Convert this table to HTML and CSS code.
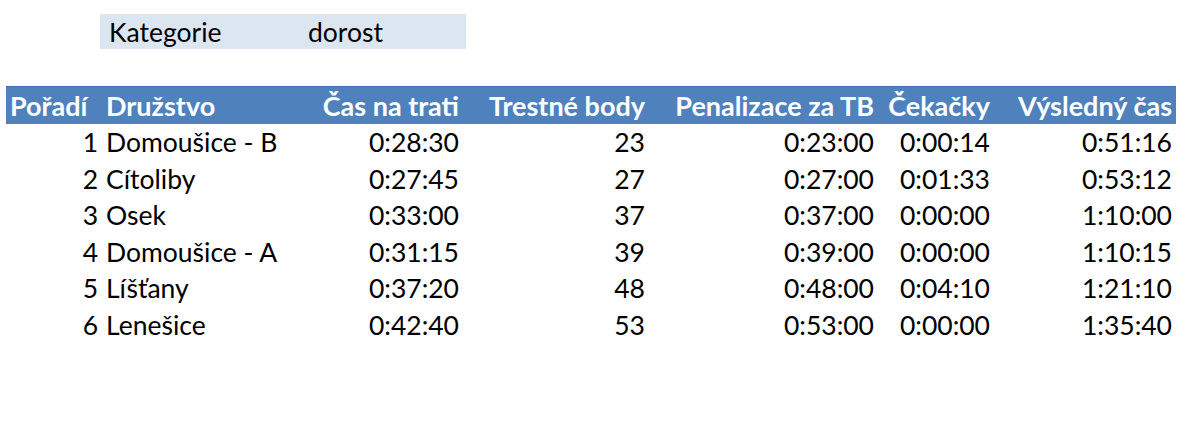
FILE: index.html
```html
<!DOCTYPE html>
<html lang="cs">
<head>
<meta charset="utf-8">
<title>Výsledky - dorost</title>
<link rel="stylesheet" href="styles.css">
</head>
<body>
<div class="category">
  <span class="cat-label">Kategorie</span>
  <span class="cat-value">dorost</span>
</div>
<table class="results">
  <colgroup>
    <col class="c1"><col class="c2"><col class="c3"><col class="c4"><col class="c5"><col class="c6"><col class="c7">
  </colgroup>
  <thead>
    <tr>
      <th class="left">Pořadí</th>
      <th class="left">Družstvo</th>
      <th>Čas na trati</th>
      <th>Trestné body</th>
      <th>Penalizace za TB</th>
      <th>Čekačky</th>
      <th>Výsledný čas</th>
    </tr>
  </thead>
  <tbody>
    <tr><td>1</td><td class="left">Domoušice - B</td><td>0:28:30</td><td>23</td><td>0:23:00</td><td>0:00:14</td><td>0:51:16</td></tr>
    <tr><td>2</td><td class="left">Cítoliby</td><td>0:27:45</td><td>27</td><td>0:27:00</td><td>0:01:33</td><td>0:53:12</td></tr>
    <tr><td>3</td><td class="left">Osek</td><td>0:33:00</td><td>37</td><td>0:37:00</td><td>0:00:00</td><td>1:10:00</td></tr>
    <tr><td>4</td><td class="left">Domoušice - A</td><td>0:31:15</td><td>39</td><td>0:39:00</td><td>0:00:00</td><td>1:10:15</td></tr>
    <tr><td>5</td><td class="left">Líšťany</td><td>0:37:20</td><td>48</td><td>0:48:00</td><td>0:04:10</td><td>1:21:10</td></tr>
    <tr><td>6</td><td class="left">Lenešice</td><td>0:42:40</td><td>53</td><td>0:53:00</td><td>0:00:00</td><td>1:35:40</td></tr>
  </tbody>
</table>
</body>
</html>
```
FILE: styles.css
```css
html, body {
  margin: 0;
  padding: 0;
  background: #ffffff;
}
body {
  font-family: Lato, "Open Sans", sans-serif;
  font-size: 26.5px;
  color: #000000;
}
.category {
  display: flex;
  align-items: center;
  margin: 14px 0 0 100px;
  width: 366px;
  height: 35px;
  background: #dce6f1;
}
.cat-label {
  width: 199px;
  padding-left: 9px;
}
.results {
  margin: 37px 0 0 6px;
  width: 1170px;
  border-collapse: collapse;
  table-layout: fixed;
}
.c1 { width: 96px; }
.c2 { width: 208px; }
.c3 { width: 153px; }
.c4 { width: 186px; }
.c5 { width: 229px; }
.c6 { width: 116px; }
.c7 { width: 182px; }
.results th {
  background: #4f81bd;
  color: #ffffff;
  font-weight: 700;
  font-size: 27px;
  height: 37px;
  padding: 0 4px;
  text-align: right;
  white-space: nowrap;
  border-top: 1px solid #3f6fa8;
}
.results td {
  height: 36.5px;
  padding: 0 4px;
  text-align: right;
  white-space: nowrap;
}
.results .left {
  text-align: left;
}
```
